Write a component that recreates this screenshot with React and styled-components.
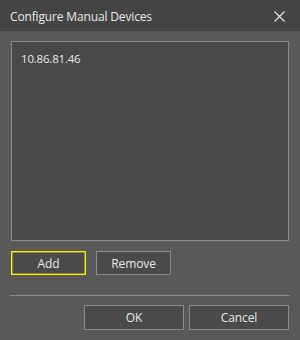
import React from "react";
import styled, { createGlobalStyle } from "styled-components";

const GlobalStyle = createGlobalStyle`
  html, body {
    margin: 0;
    padding: 0;
    background: #595959;
  }
  * {
    box-sizing: border-box;
  }
`;

const Dialog = styled.div`
  width: 300px;
  height: 340px;
  display: flex;
  flex-direction: column;
  background: #595959;
  color: #e8e8e8;
  font-family: "Open Sans", "Noto Sans", "Liberation Sans", sans-serif;
  font-size: 12px;
`;

const TitleBar = styled.div`
  height: 31px;
  flex-shrink: 0;
  display: flex;
  align-items: center;
  justify-content: space-between;
  padding: 1px 14px 0 10px;
  background: #444444;
  font-size: 12px;
  letter-spacing: -0.15px;
`;

const CloseButton = styled.button`
  width: 14px;
  height: 14px;
  padding: 0;
  border: none;
  background: transparent;
  display: flex;
  align-items: center;
  justify-content: center;
  cursor: pointer;
`;

const Body = styled.div`
  flex: 1;
  display: flex;
  flex-direction: column;
  padding: 10px 11px 0 11px;
`;

const DeviceList = styled.ul`
  list-style: none;
  margin: 0;
  height: 200px;
  padding: 9px 9px;
  border: 1px solid #8a8a8a;
  background: #484848;
`;

const DeviceItem = styled.li`
  font-size: 11.5px;
  line-height: 16px;
  letter-spacing: -0.2px;
`;

const ButtonRow = styled.div`
  display: flex;
  gap: 10px;
  margin-top: 10px;
`;

const Button = styled.button`
  width: ${(p) => p.$width}px;
  height: ${(p) => p.$height}px;
  padding: 0;
  background: #4a4a4a;
  border: 1px solid ${(p) => (p.$focused ? "#fff000" : "#8c8c8c")};
  box-shadow: ${(p) => (p.$focused ? "inset 0 0 0 0.5px #d8cf10" : "none")};
  color: #e8e8e8;
  font-family: inherit;
  font-size: 12px;
  letter-spacing: -0.1px;
  cursor: pointer;
`;

const Separator = styled.hr`
  margin: 20px -1px 0 -1px;
  border: none;
  height: 1px;
  background: #8a8a8a;
`;

const Footer = styled.div`
  display: flex;
  justify-content: flex-end;
  gap: 5px;
  margin-top: 9px;
`;

const devices = ["10.86.81.46"];

export default function App() {
  return (
    <>
      <GlobalStyle />
      <Dialog>
        <TitleBar>
          <span>Configure Manual Devices</span>
          <CloseButton aria-label="Close">
            <svg width="11" height="11" viewBox="0 0 11 11">
              <path
                d="M0.5 0.5 L10.5 10.5 M10.5 0.5 L0.5 10.5"
                stroke="#e8e8e8"
                strokeWidth="1.1"
                fill="none"
              />
            </svg>
          </CloseButton>
        </TitleBar>
        <Body>
          <DeviceList>
            {devices.map((d) => (
              <DeviceItem key={d}>{d}</DeviceItem>
            ))}
          </DeviceList>
          <ButtonRow>
            <Button $width={75} $height={24} $focused>
              Add
            </Button>
            <Button $width={75} $height={24}>
              Remove
            </Button>
          </ButtonRow>
          <Separator />
          <Footer>
            <Button $width={100} $height={25}>
              OK
            </Button>
            <Button $width={100} $height={25}>
              Cancel
            </Button>
          </Footer>
        </Body>
      </Dialog>
    </>
  );
}
